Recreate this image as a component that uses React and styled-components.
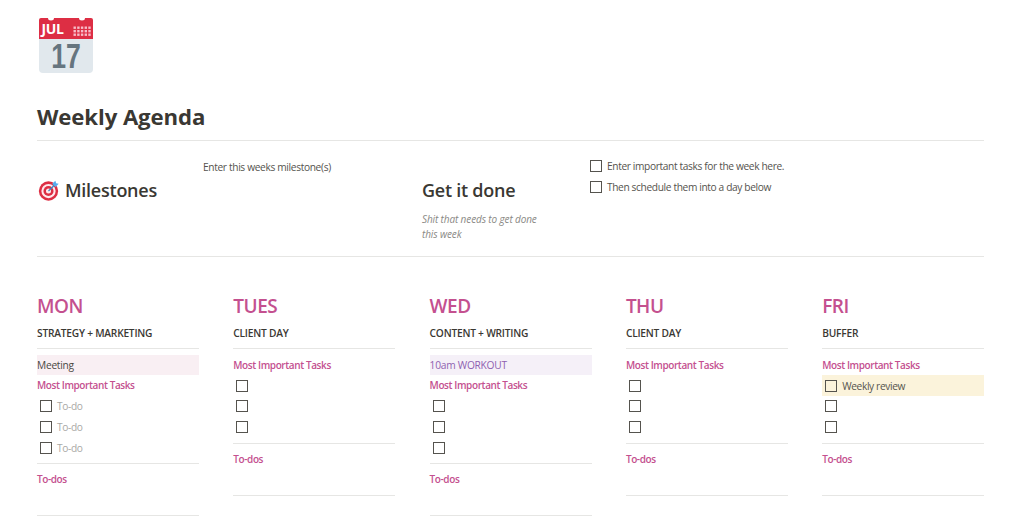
import React from "react"
import styled, { createGlobalStyle } from "styled-components"

const GlobalStyle = createGlobalStyle`
  html, body {
    margin: 0;
    padding: 0;
    background: #fff;
    overflow: hidden;
  }
  body {
    font-family: "Open Sans", "Noto Sans", sans-serif;
    color: #37352f;
  }
`

const Page = styled.div`
  width: 1024px;
  height: 519px;
  overflow: hidden;
  box-sizing: border-box;
  padding: 17px 40px 0 37px;
`

const PageIcon = styled.svg`
  display: block;
  width: 57px;
  height: 57px;
  overflow: visible;
`

const TargetSvg = styled.svg`
  flex: none;
  width: 21px;
  height: 21px;
  margin-left: 1px;
`

const Title = styled.h1`
  margin: 28px 0 0;
  height: 38px;
  line-height: 30px;
  font-size: 22.2px;
  font-weight: 700;
  letter-spacing: -0.1px;
  color: #3a3833;
  border-bottom: 1px solid #e6e6e4;
`

const TopRow = styled.div`
  display: grid;
  grid-template-columns: 166px 219px 168px 1fr;
  height: 115px;
  border-bottom: 1px solid #e6e6e4;
`

const Cell = styled.div`
  padding-top: ${(p) => p.$top || 0}px;
`

const SectionHead = styled.div`
  display: flex;
  align-items: center;
  gap: 6px;
  height: 26px;
  font-size: 18px;
  font-weight: 600;
  letter-spacing: -0.25px;
  color: #3a3833;
`

const Hint = styled.div`
  font-size: 10.2px;
  line-height: 15px;
  letter-spacing: -0.35px;
  color: #55534e;
`

const Note = styled.div`
  margin-top: 9px;
  font-size: 10px;
  line-height: 15px;
  font-style: italic;
  letter-spacing: -0.12px;
  color: #8a8985;
`

const CheckRow = styled.div`
  display: flex;
  align-items: center;
  height: 20.7px;
  padding-left: ${(p) => p.$indent ?? 3}px;
  gap: 4px;
  font-size: 10.2px;
  letter-spacing: -0.37px;
  color: ${(p) => (p.$muted ? "#aaa9a6" : "#55534e")};
  background: ${(p) => p.$bg || "transparent"};
`

const Box = styled.span`
  flex: none;
  width: 12px;
  height: 12px;
  box-sizing: border-box;
  border: 1.5px solid #55534e;
  margin-right: 1px;
`

const Columns = styled.div`
  display: grid;
  grid-template-columns: repeat(5, 162px);
  column-gap: 34.3px;
  margin-top: 35px;
`

const Day = styled.section`
  display: flex;
  flex-direction: column;
`

const DayName = styled.h2`
  margin: 0;
  height: 27px;
  line-height: 29px;
  font-size: 19px;
  font-weight: 600;
  letter-spacing: -0.5px;
  color: #c4508f;
`

const Focus = styled.div`
  height: 29px;
  line-height: 29px;
  font-size: 10.2px;
  font-weight: 600;
  letter-spacing: -0.22px;
  color: #3a3833;
  border-bottom: 1px solid #e6e6e4;
`

const Stack = styled.div`
  padding-top: 5.6px;
`

const Band = styled.div`
  height: 20.7px;
  line-height: 20.7px;
  font-size: 10.2px;
  letter-spacing: -0.25px;
  color: ${(p) => p.$color};
  background: ${(p) => p.$bg};
`

const Label = styled.div`
  height: 20.7px;
  line-height: 20.7px;
  font-size: 10px;
  font-weight: 600;
  letter-spacing: -0.4px;
  color: #c4508f;
`

const Divider = styled.div`
  height: 1px;
  margin-top: 5.4px;
  background: #e6e6e4;
`

const TodoBlock = styled.div`
  height: 46px;
  padding-top: 5px;
  border-bottom: 1px solid #e6e6e4;
`

const CalendarIcon = () => (
  <PageIcon viewBox="0 0 57 57">
    <path d="M2 20h54v32a4 4 0 0 1-4 4H6a4 4 0 0 1-4-4z" fill="#e1e8ed" />
    <path d="M4 1h7a3 2.5 0 0 0 6 0h25a3 2.5 0 0 0 6 0h6a2 2 0 0 1 2 2v19H2V3a2 2 0 0 1 2-2z" fill="#dd2e44" />
    <text x="4.5" y="17" fontFamily="Open Sans" fontSize="14" fontWeight="700" fill="#fff" letterSpacing="-0.4">JUL</text>
    <text transform="translate(29 51) scale(0.74 1)" textAnchor="middle" fontFamily="Liberation Sans" fontSize="36" fontWeight="700" fill="#66757f">17</text>
    <g fill="#f7bcc8">
      {[0, 1, 2].map((r) =>
        [0, 1, 2, 3, 4].map((c) => <rect key={`${r}${c}`} x={36.5 + c * 3.7} y={9.5 + r * 3.5} width="2.4" height="2.4" />)
      )}
    </g>
  </PageIcon>
)

const TargetIcon = () => (
  <TargetSvg viewBox="0 0 20 20">
    <circle cx="10" cy="10.5" r="9.2" fill="#dd2e44" />
    <circle cx="10" cy="10.5" r="6.8" fill="#ffe8ec" />
    <circle cx="10" cy="10.5" r="4.8" fill="#dd2e44" />
    <circle cx="10" cy="10.5" r="2.4" fill="#ffe8ec" />
    <path d="M10 10.5 16 4.5" stroke="#3b88c3" strokeWidth="1.2" />
    <path d="M13.5 3.5 16.5.6l.8 2.4 2.4.6-3 3z" fill="#55acee" />
  </TargetSvg>
)

const days = [
  { name: "MON", focus: "STRATEGY + MARKETING", band: { text: "Meeting", color: "#4a4843", bg: "#f9eff3" }, tasks: ["To-do", "To-do", "To-do"], muted: true },
  { name: "TUES", focus: "CLIENT DAY", tasks: ["", "", ""] },
  { name: "WED", focus: "CONTENT + WRITING", band: { text: "10am WORKOUT", color: "#8f5fb0", bg: "#f5f0f8" }, tasks: ["", "", ""] },
  { name: "THU", focus: "CLIENT DAY", tasks: ["", "", ""] },
  { name: "FRI", focus: "BUFFER", tasks: ["Weekly review", "", ""], highlight: true },
]

const App = () => (
  <Page>
    <GlobalStyle />
    <CalendarIcon />
    <Title>Weekly Agenda</Title>
    <TopRow>
      <Cell $top={36}>
        <SectionHead><TargetIcon />Milestones</SectionHead>
      </Cell>
      <Cell $top={19}>
        <Hint>Enter this weeks milestone(s)</Hint>
      </Cell>
      <Cell $top={36}>
        <SectionHead>Get it done</SectionHead>
        <Note>Shit that needs to get done<br />this week</Note>
      </Cell>
      <Cell $top={15}>
        <CheckRow $indent={0}><Box />Enter important tasks for the week here.</CheckRow>
        <CheckRow $indent={0}><Box />Then schedule them into a day below</CheckRow>
      </Cell>
    </TopRow>
    <Columns>
      {days.map((day) => (
        <Day key={day.name}>
          <DayName>{day.name}</DayName>
          <Focus>{day.focus}</Focus>
          <Stack>
            {day.band && <Band $color={day.band.color} $bg={day.band.bg}>{day.band.text}</Band>}
            <Label>Most Important Tasks</Label>
            {day.tasks.map((task, i) => (
              <CheckRow key={i} $muted={day.muted} $bg={day.highlight && i === 0 ? "#fbf3db" : undefined}>
                <Box />{task}
              </CheckRow>
            ))}
            <Divider />
          </Stack>
          <TodoBlock><Label>To-dos</Label></TodoBlock>
        </Day>
      ))}
    </Columns>
  </Page>
)

export default App
